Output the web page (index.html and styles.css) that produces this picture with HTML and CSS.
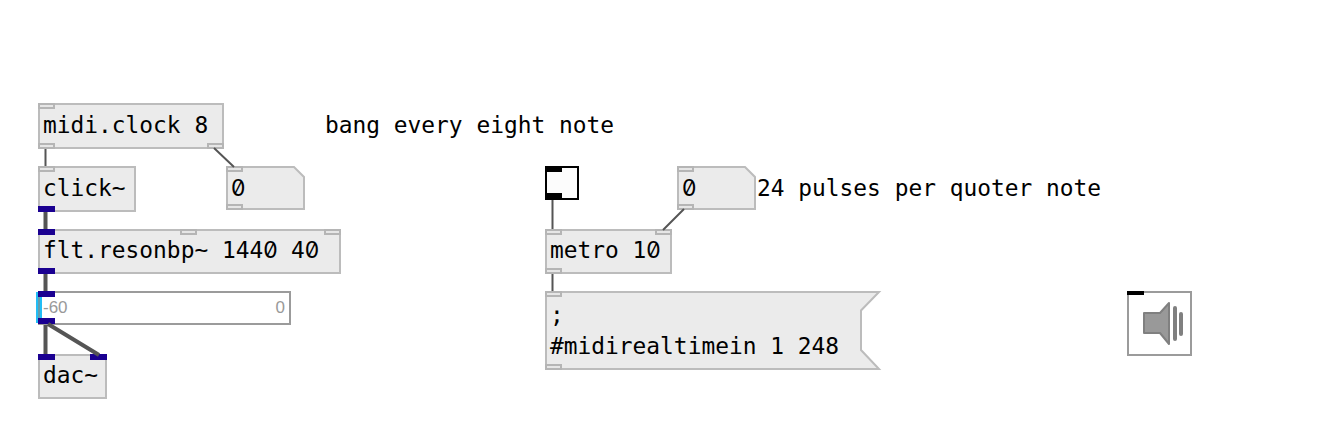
FILE: index.html
```html
<!DOCTYPE html>
<html lang="en">
<head>
<meta charset="utf-8">
<title>midi.clock patch</title>
<link rel="stylesheet" href="styles.css">
</head>
<body>
<main class="patch">
  <div class="node box clock"><i class="port in"></i><span>midi.clock 8</span><i class="port out"></i><i class="port out right"></i></div>
  <div class="node box click"><i class="port in"></i><span>click~</span><i class="port out signal"></i></div>
  <div class="node number count">
    <svg class="shape" width="79" height="44"><path d="M1 1H68L78 11V43H1Z"/></svg>
    <i class="port in"></i><span class="zero">0</span><i class="port out"></i>
  </div>
  <div class="node box filter"><i class="port in signal"></i><i class="port in mid"></i><i class="port in right"></i><span>flt.resonbp~ 144<b class="zero">0</b> 4<b class="zero">0</b></span><i class="port out signal"></i></div>
  <div class="node slider"><i class="level"></i><i class="port in signal"></i><span class="min">-60</span><span class="max">0</span><i class="port out signal"></i></div>
  <div class="node box dac"><i class="port in signal"></i><i class="port in right signal"></i><span>dac~</span></div>
  <div class="node toggle"><i class="port in"></i><i class="port out"></i></div>
  <div class="node number tempo">
    <svg class="shape" width="79" height="44"><path d="M1 1H68L78 11V43H1Z"/></svg>
    <i class="port in"></i><span class="zero">0</span><i class="port out"></i>
  </div>
  <div class="node box metro"><i class="port in"></i><i class="port in right"></i><span>metro 1<b class="zero">0</b></span><i class="port out"></i></div>
  <div class="node message">
    <svg class="shape" width="337" height="79"><path d="M1 1H334L316 19.5V59L334 78H1Z"/></svg>
    <i class="port in"></i><span>;<br>#midirealtimein 1 248</span><i class="port out"></i>
  </div>
  <div class="node comment first">bang every eight note</div>
  <div class="node comment second">24 pulses per quoter note</div>
  <div class="node speaker">
    <i class="port in"></i>
    <svg width="65" height="65"><path class="cone" d="M17 22H33L42 12V53L33 42H17Z"/><path class="wave" d="M48 17V48M54 23V43"/></svg>
  </div>
  <svg class="wires" width="1328" height="432">
    <path d="M45.5 149V166M214 148L234 167M552.5 200V229M684 209L663 230M552.5 274V291"/>
    <path class="audio" d="M45.5 212V229M45.5 274V291M45.5 325V354M48 324L99 355"/>
  </svg>
</main>
</body>
</html>
```
FILE: styles.css
```css
body { margin: 0; background: #fff; }
.patch {
  position: relative; width: 1328px; height: 432px; overflow: hidden;
  font: 22.87px/31px "DejaVu Sans Mono", monospace; color: #000; white-space: pre;
}
.patch * { box-sizing: border-box; }
.node { position: absolute; font-size: 22.87px; white-space: nowrap; }
.box { border: 2px solid #bcbcbc; background: #ebebeb; padding: 5px 0 0 3px; height: 46px; }
.node span { position: relative; white-space: pre; }
.clock { left: 38px; top: 103px; width: 186px; }
.click { left: 38px; top: 166px; width: 98px; }
.filter { left: 38px; top: 229px; width: 303px; }
.dac { left: 38px; top: 354px; width: 69px; }
.metro { left: 545px; top: 229px; width: 127px; }
.filter, .dac, .metro { height: 45px; padding-top: 4px; }
.number { width: 79px; height: 44px; padding: 7px 0 0 5px; }
.count { left: 226px; top: 166px; }
.tempo { left: 677px; top: 166px; }
.message { left: 545px; top: 291px; width: 337px; height: 79px; padding: 9px 0 0 5px; }
.shape { position: absolute; left: 0; top: 0; fill: #ebebeb; stroke: #bcbcbc; stroke-width: 2; }
.zero { font-family: Inter, sans-serif; font-weight: 400; font-feature-settings: "zero" 1; letter-spacing: -.4px; }
.port { position: absolute; width: 17px; height: 6px; border: 2px solid #b5b5b5; background: #e6e6e6; }
.port.in { left: 0; top: 0; }
.port.out { left: 0; bottom: 0; }
.box .port.in { left: -2px; top: -2px; }
.box .port.out { left: -2px; bottom: -2px; }
.box .port.right { left: auto; right: -2px; }
.box .port.mid { left: 140px; }
.port.signal { border: 0; background: #1a0091; }
.slider { left: 38px; top: 291px; width: 253px; height: 34px; border: 2px solid #9b9b9b; background: #fff; font: 17px/30px "Liberation Sans", Arial, sans-serif; color: #999; display: flex; justify-content: space-between; padding: 0 4px 0 3px; }
.slider .port.in { left: -2px; top: -2px; }
.slider .port.out { left: -2px; bottom: -1px; }
.level { position: absolute; left: -4px; top: -1px; width: 6px; height: 31px; background: linear-gradient(to right, #22bdf5 2px, #649cad 2px 4px, #22bdf5 4px); }
.toggle { left: 545px; top: 166px; width: 34px; height: 34px; border: 2px solid #000; background: #fcfcfc; }
.toggle .port { left: -2px; border: 0; background: #000; }
.toggle .port.in { top: -2px; }
.toggle .port.out { bottom: -1px; }
.first { left: 325px; top: 110px; }
.second { left: 757px; top: 173px; }
.speaker { left: 1127px; top: 291px; width: 65px; height: 65px; border: 2px solid #9b9b9b; }
.speaker .port { left: -2px; top: -2px; height: 4px; border: 0; background: #000; }
.speaker svg { position: absolute; left: -2px; top: -2px; }
.cone { fill: #999; stroke: #808080; stroke-width: 2; stroke-linejoin: round; }
.wave { stroke: #808080; stroke-width: 4; stroke-linecap: round; }
.wires { position: absolute; left: 0; top: 0; fill: none; stroke: #555; stroke-width: 2; pointer-events: none; }
.audio { stroke-width: 4; }
```
